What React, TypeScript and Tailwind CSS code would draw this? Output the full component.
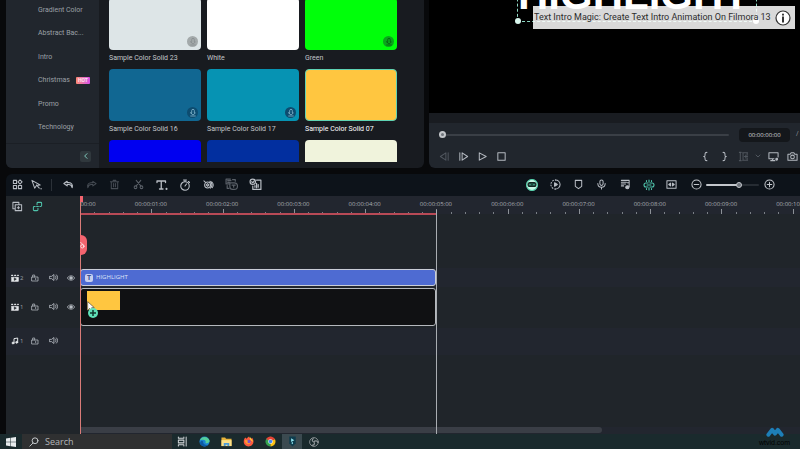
import type { ReactNode } from "react";
import clsx from "clsx";

const CATEGORIES = [
  { label: "Gradient Color" },
  { label: "Abstract Bac..." },
  { label: "Intro" },
  { label: "Christmas", hot: true },
  { label: "Promo" },
  { label: "Technology" },
];

const SWATCHES = [
  { label: "Sample Color Solid 23", color: "bg-[#dde5e7]", download: "light" },
  { label: "White", color: "bg-white" },
  { label: "Green", color: "bg-[#00ff0a]", download: "green" },
  { label: "Sample Color Solid 16", color: "bg-[#116792]", download: "blue" },
  { label: "Sample Color Solid 17", color: "bg-[#0693b3]", download: "blue" },
  { label: "Sample Color Solid 07", color: "bg-[#ffc640]", selected: true },
  { color: "bg-[#0000f0]" },
  { color: "bg-[#022f9f]" },
  { color: "bg-[#f0f3dc]" },
];

const DOWNLOAD_STYLES: Record<string, string> = {
  light: "bg-[#a3a9aa] text-[#858b8d]",
  green: "bg-[#0aa51c] text-[#07590f]",
  blue: "bg-[#0d4c70] text-[#8fc0d6]",
};

const SECONDS = [0, 1, 2, 3, 4, 5, 6, 7, 8, 9, 10];

function Icon({
  children,
  className = "size-[11px]",
}: {
  children: ReactNode;
  className?: string;
}) {
  return (
    <svg
      viewBox="0 0 24 24"
      fill="none"
      stroke="currentColor"
      strokeWidth="2.2"
      strokeLinecap="round"
      strokeLinejoin="round"
      className={clsx("shrink-0", className)}
      aria-hidden="true"
    >
      {children}
    </svg>
  );
}

function IconButton({
  label,
  children,
  className = "w-5 text-[#b9bec5]",
}: {
  label: string;
  children: ReactNode;
  className?: string;
}) {
  return (
    <button
      type="button"
      aria-label={label}
      className={clsx("flex h-5 shrink-0 items-center justify-center", className)}
    >
      {children}
    </button>
  );
}

function MediaPanel() {
  return (
    <section className="flex w-[418px] shrink-0 overflow-hidden rounded-b-md bg-[#181b20] font-[Roboto,sans-serif]">
      <aside className="flex w-[93px] shrink-0 flex-col bg-[#21262d]">
        <nav className="flex flex-1 flex-col justify-between border-b border-[#1b1f25] pt-1 pb-2.5">
          {CATEGORIES.map((category) => (
            <a
              key={category.label}
              href="#"
              className="flex items-center gap-1.5 pl-8 text-[7px] leading-3 whitespace-nowrap text-[#9ba0a6]"
            >
              {category.label}
              {category.hot && (
                <span className="rounded-[1px] bg-linear-to-r from-[#ff8a70] to-[#d84be8] px-0.5 text-[5px] leading-[7px] font-bold text-white/80">
                  HOT
                </span>
              )}
            </a>
          ))}
        </nav>
        <div className="flex h-6 items-center justify-end pr-2">
          <button
            type="button"
            aria-label="Collapse sidebar"
            className="flex size-[11px] items-center justify-center rounded-xs bg-[#30383d] text-[#7fc9bb]"
          >
            <Icon className="size-2">
              <path d="M15 5l-7 7 7 7" strokeWidth="3" />
            </Icon>
          </button>
        </div>
      </aside>

      <div className="mb-1.5 ml-2.5 flex-1 overflow-hidden">
        <div className="-mt-0.5 grid w-72 grid-cols-3 gap-x-1.5">
          {SWATCHES.map((swatch) => (
            <button
              key={swatch.color}
              type="button"
              aria-label={swatch.label ?? "Color solid"}
              className="text-left"
            >
              <span
                className={clsx(
                  "flex h-13 items-end justify-end rounded p-[3px]",
                  swatch.color,
                  swatch.selected && "border border-[#5fd3b4]",
                )}
              >
                {swatch.download && (
                  <span
                    className={clsx(
                      "flex size-[11px] items-center justify-center rounded-full",
                      DOWNLOAD_STYLES[swatch.download],
                    )}
                  >
                    <Icon className="size-2">
                      <path d="M8 12V5a4 4 0 0 1 8 0v7h3l-7 6-7-6zM5 21h14" />
                    </Icon>
                  </span>
                )}
              </span>
              {swatch.label && (
                <span
                  className={clsx(
                    "block h-[19px] text-[7px] leading-4 whitespace-nowrap",
                    swatch.selected ? "text-white" : "text-[#c3c6ca]",
                  )}
                >
                  {swatch.label}
                </span>
              )}
            </button>
          ))}
        </div>
      </div>
    </section>
  );
}

function PlayerPanel() {
  return (
    <section className="flex min-w-0 flex-1 flex-col overflow-hidden rounded-bl-md bg-[#21262d]">
      <div className="relative h-[113px] overflow-hidden bg-black">
        {/* selected title on the preview canvas */}
        <div className="absolute right-[43px] bottom-[91px] flex h-20 w-[240px] items-end border border-dashed border-[#8fd8c4] font-['Liberation_Sans',sans-serif] text-[42px] leading-[32px] font-bold text-white">
          <span className="mb-2.5">HIGHLIGHT</span>
          <i className="absolute -bottom-[3px] -left-[3px] size-1.5 rounded-full bg-[#d9f7ee]" />
          <i className="absolute -right-[3px] -bottom-[3px] size-1.5 rounded-full bg-white" />
        </div>
        <div className="absolute top-1.5 right-[5px] flex h-[23px] w-[262px] items-center justify-between bg-white/85 pr-1 pl-px font-[Roboto,sans-serif] text-[9px] whitespace-nowrap text-[#2c2c2c]">
          Text Intro Magic: Create Text Intro Animation On Filmora 13
          <Icon className="size-4 text-[#333]">
            <circle cx="12" cy="12" r="10.5" fill="#fff" strokeWidth="1.8" />
            <path d="M12 11v6.5M12 6.8v.4" strokeWidth="3" />
          </Icon>
        </div>
      </div>
      <div className="h-2.5 bg-[#191c21]" />
      <div className="flex h-[23px] items-center pl-2.5">
        <input
          type="range"
          aria-label="Playback position"
          defaultValue={0}
          className="h-0.5 min-w-0 flex-1 appearance-none rounded bg-[#3a3f46] [&::-webkit-slider-thumb]:size-[7px] [&::-webkit-slider-thumb]:appearance-none [&::-webkit-slider-thumb]:rounded-full [&::-webkit-slider-thumb]:border-2 [&::-webkit-slider-thumb]:border-[#c3c6ca] [&::-webkit-slider-thumb]:bg-[#70757c]"
        />
        <span className="ml-2.5 w-[51px] rounded bg-[#14171b] text-center text-[6px] leading-[14px] text-[#d5d8dc]">
          00:00:00:00
        </span>
        <span className="w-[10px] pl-1.5 text-[7px] text-[#8b9098]">/</span>
      </div>
      <div className="flex flex-1 items-start justify-between pl-1.5 text-[#b4b9c0]">
        <div className="flex">
          <IconButton label="Previous frame" className="w-[19px] text-[#50565e]">
            <Icon>
              <path d="M15 4v16L3 12zM20 4v16" />
            </Icon>
          </IconButton>
          <IconButton label="Next frame" className="w-[19px]">
            <Icon>
              <path d="M9 4v16l12-8zM4 4v16" />
            </Icon>
          </IconButton>
          <IconButton label="Play" className="w-[19px]">
            <Icon>
              <path d="M5 4v16l15-8z" />
            </Icon>
          </IconButton>
          <IconButton label="Stop" className="w-[19px]">
            <Icon>
              <path d="M4 4h16v16H4z" />
            </Icon>
          </IconButton>
        </div>
        <div className="flex gap-[3px]">
          <IconButton label="Mark in" className="w-4">
            <Icon>
              <path d="M15 3c-3 0-4 1-4 3v3c0 2-1 3-3 3 2 0 3 1 3 3v3c0 2 1 3 4 3" />
            </Icon>
          </IconButton>
          <IconButton label="Mark out" className="w-4">
            <Icon>
              <path d="M9 3c3 0 4 1 4 3v3c0 2 1 3 3 3-2 0-3 1-3 3v3c0 2-1 3-4 3" />
            </Icon>
          </IconButton>
          <IconButton label="Range" className="w-4 text-[#50565e]">
            <Icon>
              <path d="M3 3h4M5 3v18M3 21h4M10 4h11M10 20h11M11 4v16M20 4v5M20 15v5M14 12h7M17 9v6" />
            </Icon>
          </IconButton>
          <IconButton label="Range options" className="w-2 text-[#50565e]">
            <Icon className="size-1.5">
              <path d="M4 8l8 8 8-8" strokeWidth="4" />
            </Icon>
          </IconButton>
          <IconButton label="Display" className="w-4">
            <Icon>
              <path d="M13 17H2V4h20v9M6 21h9M10 17v4" />
              <circle cx="19" cy="18" r="2" fill="currentColor" />
            </Icon>
          </IconButton>
          <IconButton label="Snapshot" className="w-4">
            <Icon>
              <path d="M2 7h5l2-3h6l2 3h5v13H2z" />
              <circle cx="12" cy="13" r="4" />
            </Icon>
          </IconButton>
        </div>
      </div>
    </section>
  );
}

function Toolbar() {
  return (
    <div className="flex h-[22px] items-center justify-between rounded-tl-md bg-[#0d131a] pr-[21px] pb-px pl-px">
      <div className="flex items-center">
        <IconButton label="Layout">
          <Icon>
            <path d="M3 3h7v7H3zM3 14h7v7H3zM14 14h7v7h-7zM17.5 2l4.500 4.500-4.500 4.500L13 6.500z" />
          </Icon>
        </IconButton>
        <IconButton label="Select" className="w-[18px] text-[#b9bec5]">
          <Icon>
            <path d="M2 3l6 17 4-6 8-1zM12 13l6 7" />
            <path d="M22 21v.5" strokeWidth="3" />
          </Icon>
        </IconButton>
        <span className="mx-1.5 h-3 w-px bg-[#2b3138]" />
        <div className="flex w-[207px] justify-between">
          <IconButton label="Undo">
            <Icon>
              <path
                d="M9 5L2 10l7 5v-3h4c4 0 6 2 7 7 2-7-2-11-7-11H9z"
                strokeWidth="2.6"
              />
            </Icon>
          </IconButton>
          <IconButton label="Redo" className="w-5 text-[#474d55]">
            <Icon>
              <path d="M15 5l7 5-7 5v-3h-4c-4 0-6 2-7 7-2-7 2-11 7-11h4z" />
            </Icon>
          </IconButton>
          <IconButton label="Delete" className="w-5 text-[#474d55]">
            <Icon>
              <path d="M3 6h18M9 3h6M5 6v15h14V6M10 10v7M14 10v7" />
            </Icon>
          </IconButton>
          <IconButton label="Split" className="w-5 text-[#5a6068]">
            <Icon>
              <circle cx="5.500" cy="18" r="3" />
              <circle cx="18.500" cy="18" r="3" />
              <path d="M7 15L17 3M17 15L7 3" />
            </Icon>
          </IconButton>
          <IconButton label="Text">
            <Icon className="size-3">
              <path d="M2 7V4h17v3M10.500 4v16M7 20h7" strokeWidth="2.6" />
              <path d="M21 19.500v.5" strokeWidth="4" />
            </Icon>
          </IconButton>
          <IconButton label="Speed">
            <Icon className="size-3">
              <circle cx="12" cy="14" r="8.500" />
              <path d="M9 2h6M12 2v3M12 14l3-4M19 5l2 2" />
            </Icon>
          </IconButton>
          <IconButton label="Keyframe">
            <Icon>
              <circle cx="10" cy="13" r="6.500" />
              <path d="M2 4l4 4M10 10l3 3-3 3-3-3zM15 5c5 3 6 11 1 15M19 6c4 4 4 9 1 13" />
            </Icon>
          </IconButton>
          <IconButton label="Speech to text" className="w-5 text-[#5a6068]">
            <Icon className="size-[13px]">
              <path d="M10 2H2v9h5M5 5h6M5 8h3M9 9h8a5 5 0 0 1 0 12h-3a5 5 0 0 1-5-5zM13 13h6M16 13v4M4 14v5h3M14 3h5v3" />
            </Icon>
          </IconButton>
          <IconButton label="Text to speech">
            <Icon className="size-[13px]">
              <circle cx="7" cy="7" r="5" />
              <path d="M5 7l2 2 3-4M14 4h8v17H7v-6M11 17v-3M14 18v-8M17 17v-5" />
            </Icon>
          </IconButton>
        </div>
      </div>

      <div className="flex items-center">
        <div className="flex w-40 justify-between">
          <IconButton label="AI assistant" className="w-5 text-[#10231f]">
            <Icon className="size-3">
              <circle cx="12" cy="12" r="11" fill="#c9f7e6" stroke="#55cfaa" />
              <rect x="4" y="7" width="16" height="8" rx="4" fill="#1c4a3e" />
              <path d="M8 11v.5M16 11v.5" stroke="#6be0bd" />
            </Icon>
          </IconButton>
          <IconButton label="Render">
            <Icon>
              <path d="M12 2a10 10 0 0 1 0 20" />
              <path d="M12 22a10 10 0 0 1 0-20" strokeDasharray="2 4" />
              <path d="M10 8v8l6-4z" fill="currentColor" />
            </Icon>
          </IconButton>
          <IconButton label="Marker">
            <Icon>
              <path d="M5 3h14v13l-7 5-7-5z" />
            </Icon>
          </IconButton>
          <IconButton label="Record voiceover">
            <Icon>
              <rect x="8.500" y="2" width="7" height="12" rx="3.500" />
              <path d="M4 10c0 11 16 11 16 0M12 18v4" />
            </Icon>
          </IconButton>
          <IconButton label="Audio mixer">
            <Icon>
              <path d="M3 3h17v14M3 7h11M3 11h9M3 15h5M20 8h-4" />
              <circle cx="16" cy="18" r="3.500" fill="currentColor" />
            </Icon>
          </IconButton>
          <IconButton label="Snap" className="w-5 text-[#4fc3ab]">
            <Icon className="size-3">
              <path d="M10 8H6a4 4 0 0 0 0 8h4M14 8h4a4 4 0 0 1 0 8h-4M8 12h8M12 2v4M12 18v4M7 3v2M17 3v2M7 19v2M17 19v2" />
            </Icon>
          </IconButton>
          <IconButton label="Fit">
            <Icon>
              <path d="M2 4h20v16H2z" />
              <path d="M6 12l4-3v6zM18 12l-4-3v6z" fill="currentColor" />
            </Icon>
          </IconButton>
        </div>
        <IconButton label="Zoom out" className="ml-1 w-5 text-[#c3c7cc]">
          <Icon>
            <circle cx="12" cy="12" r="10" />
            <path d="M7 12h10" />
          </Icon>
        </IconButton>
        <input
          type="range"
          aria-label="Timeline zoom"
          defaultValue={64}
          className="h-0.5 w-[53px] appearance-none rounded bg-linear-to-r from-[#c3c7cc] from-62% to-[#262c33] to-62% [&::-webkit-slider-thumb]:size-1.5 [&::-webkit-slider-thumb]:appearance-none [&::-webkit-slider-thumb]:rounded-full [&::-webkit-slider-thumb]:border [&::-webkit-slider-thumb]:border-[#c3c7cc] [&::-webkit-slider-thumb]:bg-[#6d737a]"
        />
        <IconButton label="Zoom in" className="w-5 text-[#c3c7cc]">
          <Icon>
            <circle cx="12" cy="12" r="10" />
            <path d="M7 12h10M12 7v10" />
          </Icon>
        </IconButton>
      </div>
    </div>
  );
}

function TrackHeader({
  kind,
  index,
  className,
}: {
  kind: "video" | "audio";
  index: number;
  className: string;
}) {
  return (
    <div className={clsx("flex items-center pl-[3px] text-[#b9bec5]", className)}>
      <span className="flex w-[17px] items-center gap-px pl-0.5 text-[6px] leading-2 text-[#9ba0a6]">
        <Icon className="size-2 text-[#e3e6e9]">
          {kind === "video" ? (
            <>
              <path d="M2 10h20v12H2z" fill="currentColor" />
              <path d="M2 4h20" strokeWidth="4" strokeDasharray="3 6" />
              <path d="M10 13v6l5-3z" fill="#20252a" stroke="#20252a" />
            </>
          ) : (
            <>
              <path d="M9 18V5l11-2v13" strokeWidth="3" />
              <circle cx="6" cy="18" r="3" fill="currentColor" />
              <circle cx="17" cy="16" r="3" fill="currentColor" />
            </>
          )}
        </Icon>
        {index}
      </span>
      <IconButton label={`Lock track ${index}`} className="w-[18px]">
        <Icon className="size-2">
          <path d="M3 9h18v12H3zM5 9V3h6v6M14 13v4" />
        </Icon>
      </IconButton>
      <IconButton label={`Mute track ${index}`} className="w-[18px]">
        <Icon className="size-[9px]">
          <path d="M2 9h5l6-5v16l-6-5H2zM17 8c2 2 2 6 0 8M20 5c4 4 4 10 0 14" />
        </Icon>
      </IconButton>
      {kind === "video" && (
        <IconButton label={`Hide track ${index}`} className="w-[18px]">
          <Icon className="size-2">
            <path d="M1 12c5-9 17-9 22 0-5 9-17 9-22 0z" />
            <circle cx="12" cy="12" r="4" fill="currentColor" />
          </Icon>
        </IconButton>
      )}
    </div>
  );
}

function Ruler() {
  return (
    <div className="h-[18px] overflow-hidden bg-[#22262f]">
      <div className="flex h-[13px] items-end text-center text-[6px] leading-[9px] text-[#a9aeb4]">
        {SECONDS.map((second) => (
          <span key={second} className="w-[9.9%] shrink-0 first:-ml-9">
            00:00:{String(second).padStart(2, "0")}:00
          </span>
        ))}
      </div>
      <div className="flex h-[5px]">
        {SECONDS.map((second) => (
          <div key={second} className="flex w-[9.9%] shrink-0 items-end">
            <i className="h-[5px] flex-1 border-l border-[#8c9197]" />
            <i className="h-0.5 flex-1 border-l border-[#7a7f86]" />
            <i className="h-0.5 flex-1 border-l border-[#7a7f86]" />
            <i className="h-0.5 flex-1 border-l border-[#7a7f86]" />
            <i className="h-0.5 flex-1 border-l border-[#7a7f86]" />
          </div>
        ))}
      </div>
    </div>
  );
}

function Timeline() {
  return (
    <section className="flex min-h-0 flex-1 flex-col">
      <Toolbar />
      <div className="flex min-h-0 flex-1 bg-[#20252a]">
        <div className="w-[74px] shrink-0 bg-[#20252a]">
          <div className="flex h-[72px] items-start pl-px">
            <IconButton label="Add track" className="w-5 text-[#b9bec5]">
              <Icon>
                <path d="M6 17H2V3h13v4M7 8h14v13H7zM14 12v5M11.500 14.500h5" />
              </Icon>
            </IconButton>
            <IconButton label="Link clips" className="w-5 text-[#4fc3ab]">
              <Icon>
                <path d="M11 8V5a2 2 0 0 1 2-2h6a2 2 0 0 1 2 2v5a2 2 0 0 1-2 2h-2M13 16v3a2 2 0 0 1-2 2H5a2 2 0 0 1-2-2v-5a2 2 0 0 1 2-2h2M10 12h4" />
              </Icon>
            </IconButton>
          </div>
          <TrackHeader kind="video" index={2} className="h-[19px] bg-[#22262f]" />
          <TrackHeader kind="video" index={1} className="h-[41px] pb-0.5" />
          <TrackHeader kind="audio" index={1} className="h-[27px] bg-[#22262f] pb-0.5" />
        </div>

        <div className="relative flex min-w-0 flex-1 flex-col">
          <Ruler />
          <div className="h-[54px]" />
          <div className="h-[19px] bg-[#22262f] pt-px">
            <div className="flex h-[17px] w-[49.5%] items-center gap-[3px] rounded-[3px] border border-[#c9cdd6] bg-[#4e6bd2] pl-1 text-[6px] text-[#dfe4f8]">
              <span className="flex size-2 items-center justify-center rounded-xs bg-[#c7d0ee] text-[7px] leading-none font-bold text-[#3d4f94]">
                T
              </span>
              HIGHLIGHT
            </div>
          </div>
          <div className="h-[41px] pt-px">
            <div className="relative h-[38px] w-[49.5%] rounded-[3px] border border-[#b5b9be] bg-[#101113]">
              {/* clip being dragged in */}
              <div className="absolute top-0.5 left-1.5 h-[19px] w-[33px] bg-[#ffc640]">
                <svg viewBox="0 0 12 18" className="absolute top-2.5 left-0 h-3 w-2">
                  <path
                    d="M1 1v13l3-3 3 6 2-1-2-6h4z"
                    fill="#fff"
                    stroke="#444"
                  />
                </svg>
                <svg viewBox="0 0 20 20" className="absolute top-[17px] left-px size-2.5">
                  <circle cx="10" cy="10" r="10" fill="#5fe0b8" />
                  <path d="M10 4v12M4 10h12" stroke="#12352d" strokeWidth="3" />
                </svg>
              </div>
            </div>
          </div>
          <div className="h-[27px] bg-[#22262f]" />
          <div className="flex-1" />
          <div className="h-[7px] bg-[#22262f]">
            <div className="h-1.5 w-[72.5%] rounded-r-full bg-[#3a3e46]" />
          </div>

          <div className="absolute top-[17px] left-0 h-0.5 w-[49.5%] bg-[#b84a56]" />
          <div className="absolute top-3.5 bottom-0 left-[49.5%] w-px bg-[#a9adb2]" />
          <div className="absolute inset-y-0 left-0 w-px bg-[#d97b78]">
            <i className="absolute top-0 left-0 h-1.5 w-[3px] bg-[#f4646f]" />
            <i className="absolute top-[39px] left-0 flex h-5 w-[7px] items-center overflow-hidden rounded-r-md bg-[#f4646f] text-white">
              <Icon className="size-2">
                <path d="M2 4l9 9" />
                <circle cx="7" cy="16" r="5" />
              </Icon>
            </i>
          </div>
        </div>
      </div>
    </section>
  );
}

function Taskbar() {
  return (
    <footer className="flex h-[15px] shrink-0 items-center bg-[#1a2a2d] text-[#cfd3d6]">
      <button type="button" aria-label="Start" className="flex w-[22px] justify-center">
        <svg viewBox="0 0 20 20" className="size-2.5" fill="#e8ecee">
          <path d="M0 3l9-1.500v8H0zM10 1.300L20 0v9.500H10zM0 10.500h9v8L0 17zM10 10.500h10V20l-10-1.300z" />
        </svg>
      </button>
      <label className="flex h-full w-[150px] items-center gap-1.5 bg-[#2f3031] pl-[7px]">
        <Icon className="size-2.5">
          <circle cx="14.500" cy="9" r="7" />
          <path d="M9.500 14.500L2 22" />
        </Icon>
        <input
          type="text"
          aria-label="Search"
          placeholder="Search"
          className="w-24 bg-transparent text-[9px] leading-3 outline-none placeholder:text-[#b4b6b8]"
        />
      </label>
      <div className="flex h-full w-[152px] items-center justify-between">
        <IconButton label="Task view" className="w-5">
          <Icon>
            <path d="M3 2v3h12V2M3 22v-3h12v3M3 9h12v6H3zM20 2v20M20 9v2" />
          </Icon>
        </IconButton>
        <IconButton label="Edge" className="w-5">
          <svg viewBox="0 0 24 24" className="size-[11px]">
            <circle cx="12" cy="12" r="11" fill="#1a83d0" />
            <path d="M2 9C5 0 20-1 23 10c1 5-5 7-9 5 2-4-1-7-5-7-3 0-6 1-7 1z" fill="#53cf9b" />
            <path d="M9 12c-1 5 4 9 11 7-5 6-15 5-18-3 1-5 4-7 7-4z" fill="#0c59a4" />
          </svg>
        </IconButton>
        <IconButton label="File explorer" className="w-5">
          <svg viewBox="0 0 24 24" className="size-[11px]">
            <path d="M1 3h8l2 3h12v16H1z" fill="#e8b33b" />
            <path d="M1 9h22v13H1z" fill="#fbe08a" />
            <path d="M6 22v-7h12v7h-4v-3h-4v3z" fill="#4c9bd6" />
          </svg>
        </IconButton>
        <IconButton label="Firefox" className="w-5">
          <svg viewBox="0 0 24 24" className="size-[11px]">
            <path d="M3 6l2-3 3 3 4-5c1 3 4 3 6 5l2-2c7 10 0 19-8 19S-1 15 3 6z" fill="#ff5a3c" />
            <path d="M15 1c1 4 6 6 7 12l-5-4c-2-2-3-5-2-8z" fill="#ffca3a" />
            <circle cx="12" cy="13" r="5" fill="#7a4fd0" />
            <path d="M4 9c3-1 5 0 8 2-3 0-3 3-1 4 3 1 4-1 6-2-1 8-13 6-13-4z" fill="#ff9a2e" />
          </svg>
        </IconButton>
        <IconButton label="Chrome" className="w-5">
          <svg viewBox="0 0 24 24" className="size-[11px]">
            <path d="M12 12V1L2.500 6.500A11 11 0 0 0 12 23z" fill="#34a350" />
            <path d="M12 12l9.500-5.500A11 11 0 0 1 12 23z" fill="#fbc116" />
            <path d="M2.500 6.500a11 11 0 0 1 19 0L12 12z" fill="#e54335" />
            <circle cx="12" cy="12" r="5" fill="#fff" />
            <circle cx="12" cy="12" r="4" fill="#4285f4" />
          </svg>
        </IconButton>
        <IconButton label="Filmora" className="h-full w-5 bg-[#3b4a50]">
          <svg viewBox="0 0 24 24" className="size-[11px]">
            <path d="M5 1h14v15l-7 7-7-7z" fill="#0e3c4d" />
            <path d="M9 5l7 4-7 4zM9 15l4-2v5z" fill="#8fe3ee" />
          </svg>
        </IconButton>
        <IconButton label="OBS Studio" className="w-5 text-[#8d9497]">
          <Icon className="size-2.5">
            <circle cx="12" cy="12" r="10.500" />
            <path d="M12 12c-5-1-5-6-2-8M12 12c2-4 8-3 9 1M12 12c3 4 0 8-5 8" strokeWidth="3" />
          </Icon>
        </IconButton>
      </div>
    </footer>
  );
}

export default function App() {
  return (
    <div className="relative flex h-screen flex-col overflow-hidden bg-[#08090b] font-['Open_Sans',sans-serif]">
      <div className="flex min-h-0 flex-1 flex-col gap-1.5 pl-1.5">
        <div className="flex h-[168px] shrink-0 gap-[5px]">
          <MediaPanel />
          <PlayerPanel />
        </div>
        <Timeline />
      </div>
      <Taskbar />
      <div className="absolute right-2.5 bottom-0 flex w-[31px] flex-col items-center">
        <svg viewBox="0 0 32 18" className="h-2.5 w-[18px]">
          <path
            d="M4 14l7-9 5 7 5-7 7 9"
            fill="none"
            stroke="#1d7fb8"
            strokeWidth="7"
            strokeLinecap="round"
            strokeLinejoin="round"
          />
        </svg>
        <span className="font-['Liberation_Sans',sans-serif] text-[7px] leading-3 text-black">
          wtvid.com
        </span>
      </div>
    </div>
  );
}
